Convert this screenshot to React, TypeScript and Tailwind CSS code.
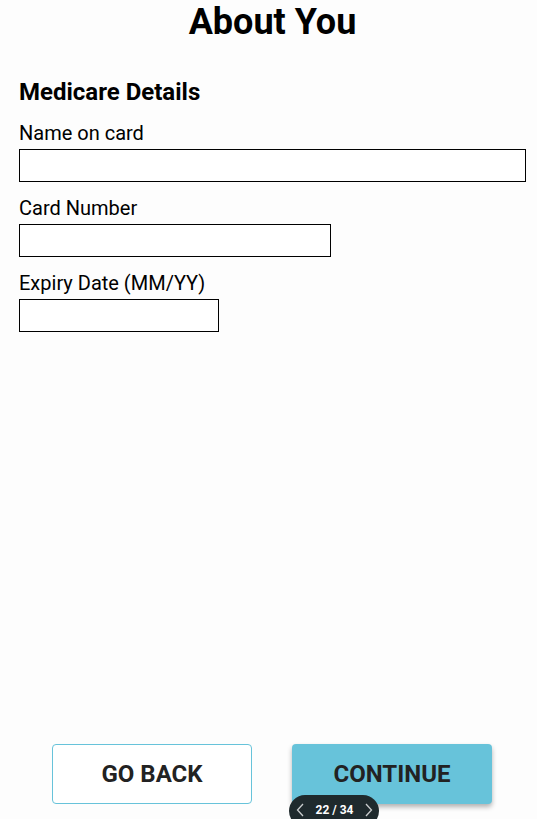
const fields = [
  { label: "Name on card", width: "w-[507px]" },
  { label: "Card Number", width: "w-[312px]" },
  { label: "Expiry Date (MM/YY)", width: "w-[200px]" },
];

const Chevron = ({ flip }: { flip?: boolean }) => (
  <svg
    width="8"
    height="14"
    viewBox="0 0 8 14"
    fill="none"
    stroke="#c9cccd"
    strokeWidth="1.3"
    className={flip ? "rotate-180" : ""}
  >
    <polyline points="7,1 1.5,7 7,13" />
  </svg>
);

const App = () => {
  return (
    <section className="relative flex flex-col h-[819px] overflow-hidden bg-[#fdfdfd] text-black font-['Roboto',sans-serif]">
      <h1 className="mt-[1px] text-center text-[36px] font-bold leading-[42px] pl-[8px]">
        About You
      </h1>

      <div className="px-[19px] pt-[35px]">
        <h2 className="text-[24px] font-bold leading-[28px]">Medicare Details</h2>

        <div className="flex flex-col gap-[14px] mt-[15px]">
          {fields.map((field, i) => (
            <div key={i} className="flex flex-col">
              <label className="mb-[4px] text-[20px] leading-[24px]">{field.label}</label>
              <input
                type="text"
                className={`${field.width} h-[33px] border border-black bg-white outline-none`}
              />
            </div>
          ))}
        </div>
      </div>

      <div className="mt-auto mb-[15px] flex justify-center gap-[40px] pl-[7px]">
        <button className="w-[200px] h-[60px] rounded-[4px] border border-[#67c3da] bg-white text-[24px] font-bold text-[#222]">
          GO BACK
        </button>
        <button className="w-[200px] h-[60px] rounded-[4px] bg-[#67c3da] text-[24px] font-bold text-[#222] shadow-[0_3px_5px_rgba(0,0,0,0.3)]">
          CONTINUE
        </button>
      </div>

      {/* slide counter */}
      <div className="absolute left-[289px] top-[795px] flex items-center justify-between w-[90px] h-[32px] pb-[3px] pl-[7px] pr-[6px] rounded-full bg-[#1f2a2d] text-white">
        <Chevron />
        <span className="text-[12px] font-bold">22 / 34</span>
        <Chevron flip />
      </div>
    </section>
  );
};

export default App;
